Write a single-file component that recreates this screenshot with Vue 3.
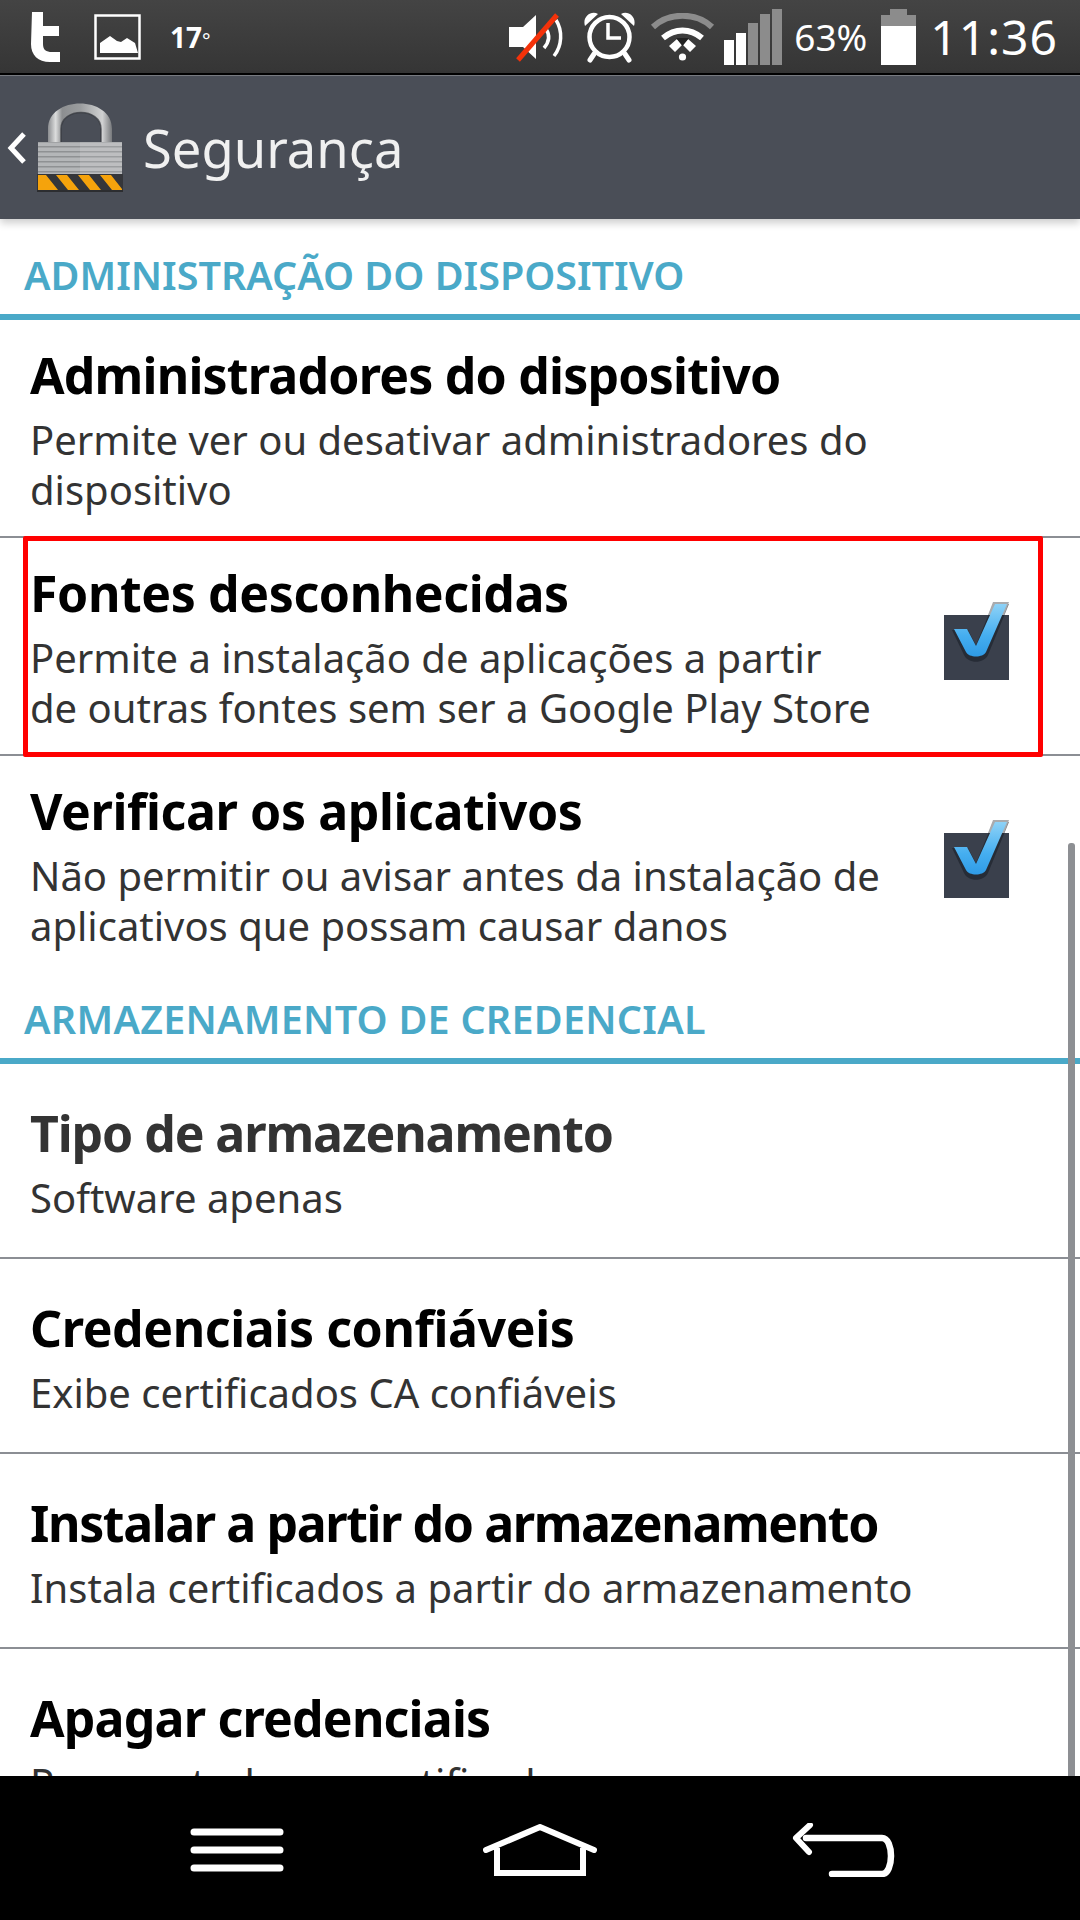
<template>
  <div class="screen">
    <!-- status bar -->
    <div class="status-bar">
      <div class="status-left">
        <svg class="ic-t" width="32" height="50" viewBox="0 0 32 50">
          <path d="M2 0h11v14h16v10H13v8c0 6 3 8 9 8h8v10h-10C8 50 1 43 1 32z" fill="#fff" />
        </svg>
        <svg class="ic-pic" width="47" height="46" viewBox="0 0 47 46">
          <rect x="1.5" y="1.5" width="44" height="43" fill="none" stroke="#fff" stroke-width="2.5" />
          <path d="M6 39V29l10-7 7 5 4 1 6-4 8 5 3 10z" fill="#fff" />
        </svg>
        <span class="temp">17<span class="deg">°</span></span>
      </div>
      <div class="status-right">
        <svg width="56" height="50" viewBox="0 0 56 50">
          <path d="M0 15h14L27 3v44L14 35H0z" fill="#fff" />
          <path d="M37 17c4 6 4 12 -2 19M47 8c7 11 6 26 -2 36" fill="none" stroke="#fff" stroke-width="3.5" />
          <path d="M9 48L48 3" stroke="#f4320a" stroke-width="5" />
        </svg>
        <svg class="ic-clock" width="55" height="52" viewBox="0 0 55 52">
          <circle cx="27.5" cy="26" r="20" fill="none" stroke="#fff" stroke-width="4.5" />
          <path d="M26 12v15h13" fill="none" stroke="#fff" stroke-width="3.5" />
          <path d="M3 15C0 6 9-1 16 3zM52 15c3-9-6-16-13-12z" fill="#fff" />
          <path d="M12 43l-4 6M43 43l4 6" stroke="#fff" stroke-width="5" stroke-linecap="round" />
        </svg>
        <svg class="ic-wifi" width="65" height="48" viewBox="0 0 65 48">
          <path d="M3 14C19-1 46-1 62 14" fill="none" stroke="#8c8c8c" stroke-width="6" />
          <path d="M13 25c12-10 27-10 39 0" fill="none" stroke="#fff" stroke-width="6" />
          <path d="M19 33l8-7 5 6-7 7zM46 33l-8-7-5 6 7 7z" fill="#fff" />
          <path d="M26 25h13l-6.500 8z" fill="#222" />
          <circle cx="32.500" cy="44" r="3.600" fill="#fff" />
        </svg>
        <div class="signal">
          <i v-for="bar in signalBars" :key="bar.h" :class="{ off: bar.off }" :style="{ height: bar.h + 'px' }"></i>
        </div>
        <span class="pct">63%</span>
        <div class="battery">
          <div class="cap"></div>
          <div class="body"><div class="fill"></div></div>
        </div>
        <span class="clock">11:36</span>
      </div>
    </div>

    <!-- title bar -->
    <div class="title-bar">
      <svg class="back" width="22" height="34" viewBox="0 0 22 34">
        <path d="M18 3L5 17l13 14" fill="none" stroke="#fff" stroke-width="5" />
      </svg>
      <svg class="lock" width="86" height="90" viewBox="0 0 86 90">
        <defs>
          <linearGradient id="shackle" x1="0" y1="0" x2="1" y2="0">
            <stop offset="0" stop-color="#8b8d90" />
            <stop offset="0.12" stop-color="#dcdddd" />
            <stop offset="0.22" stop-color="#8c8e90" />
            <stop offset="0.5" stop-color="#9a9c9e" />
            <stop offset="0.85" stop-color="#d0d1d2" />
            <stop offset="1" stop-color="#77797c" />
          </linearGradient>
          <pattern id="ribs" width="4" height="5" patternUnits="userSpaceOnUse">
            <rect width="4" height="5" fill="#b4b6b8" />
            <rect y="3" width="4" height="1.500" fill="#8f9193" />
          </pattern>
        </defs>
        <path d="M11 42V26C11-8 75-8 75 26V42H64V26C64 4 24 4 24 26V42Z" fill="url(#shackle)" />
        <path d="M24 40V26C24 4 64 4 64 26V40" fill="none" stroke="#33363c" stroke-width="1.500" opacity="0.7" />
        <rect x="1" y="39" width="84" height="33" fill="url(#ribs)" />
        <rect x="43" y="39" width="42" height="33" fill="#fff" opacity="0.12" />
        <rect x="0" y="71" width="86" height="16" fill="#35363a" />
        <path d="M1 72h8l12 15H1zM19 72h11l12 15H31zM41 72h11l12 15H53zM63 72h11l11 14v1H75z" fill="#f5a30c" />
        <rect x="0" y="87" width="86" height="2" fill="#2c2d30" />
      </svg>
      <span class="title">Segurança</span>
    </div>

    <!-- settings list -->
    <div class="list">
      <template v-for="section in sections" :key="section.name">
        <div class="section-head" :class="section.cls">{{ section.name }}</div>
        <div
          v-for="row in section.rows"
          :key="row.title"
          class="row"
          :class="[row.cls, { muted: row.muted }]"
        >
          <div class="row-text">
            <div class="row-title" :class="row.fit">{{ row.title }}</div>
            <div class="row-sub">
              <div v-for="line in row.sub" :key="line">{{ line }}</div>
            </div>
          </div>
          <svg v-if="row.check" class="check" width="66" height="80" viewBox="0 0 66 80">
            <defs>
              <linearGradient id="tick" x1="0" y1="0" x2="0" y2="1">
                <stop offset="0" stop-color="#8ed2f7" />
                <stop offset="0.6" stop-color="#45aef0" />
                <stop offset="1" stop-color="#2f9be6" />
              </linearGradient>
            </defs>
            <rect x="0" y="14" width="65" height="65" fill="#3a404c" />
            <path d="M8 27H24L32 42L49 1H65L44 52C40 61 24 61 20 52Z" fill="#151b25" opacity="0.55" transform="translate(0 2)" />
            <path d="M49 1H65L60 14H44Z" fill="#a9abae" />
            <path d="M10 28H23L32 45L51 3H63L42 51C39 57 25 57 22 51Z" fill="url(#tick)" />
          </svg>
          <div v-if="row.boxed" class="highlight"></div>
        </div>
      </template>
      <div class="scrollbar"></div>
    </div>

    <!-- nav bar -->
    <div class="nav-bar">
      <svg width="94" height="44" viewBox="0 0 94 44">
        <path d="M4 4h86M4 22h86M4 40h86" stroke="#fff" stroke-width="7" stroke-linecap="round" />
      </svg>
      <svg class="nav-home" width="114" height="52" viewBox="0 0 114 52">
        <path d="M3 26L57 3l54 23" fill="none" stroke="#fff" stroke-width="6" stroke-linecap="round" stroke-linejoin="round" />
        <path d="M14 24v25h86V24" fill="none" stroke="#fff" stroke-width="6" />
      </svg>
      <svg class="nav-back" width="104" height="54" viewBox="0 0 104 54">
        <path d="M14 15h76c12 0 12 36 0 36H40" fill="none" stroke="#fff" stroke-width="6.500" stroke-linecap="round" />
        <path d="M18 2L4 15l13 14" fill="none" stroke="#fff" stroke-width="6" stroke-linecap="round" stroke-linejoin="round" />
      </svg>
    </div>
  </div>
</template>

<script setup>
const signalBars = [
  { h: 25 },
  { h: 32 },
  { h: 42, off: true },
  { h: 51, off: true },
  { h: 56, off: true },
];

const sections = [
  {
    name: "ADMINISTRAÇÃO DO DISPOSITIVO",
    rows: [
      {
        title: "Administradores do dispositivo",
        sub: ["Permite ver ou desativar administradores do", "dispositivo"],
        cls: "h-first",
      },
      {
        title: "Fontes desconhecidas",
        sub: ["Permite a instalação de aplicações a partir", "de outras fontes sem ser a Google Play Store"],
        check: true,
        boxed: true,
        cls: "h-second",
        fit: "loose",
      },
      {
        title: "Verificar os aplicativos",
        sub: ["Não permitir ou avisar antes da instalação de", "aplicativos que possam causar danos"],
        check: true,
        cls: "h-third",
        fit: "loose",
      },
    ],
  },
  {
    name: "ARMAZENAMENTO DE CREDENCIAL",
    cls: "wide",
    rows: [
      { title: "Tipo de armazenamento", sub: ["Software apenas"], muted: true, cls: "h-single", fit: "snug" },
      { title: "Credenciais confiáveis", sub: ["Exibe certificados CA confiáveis"], cls: "h-single", fit: "loose" },
      { title: "Instalar a partir do armazenamento", sub: ["Instala certificados a partir do armazenamento"], cls: "h-single", fit: "tight" },
      { title: "Apagar credenciais", sub: ["Remove todos os certificados"], cls: "h-single" },
    ],
  },
];
</script>

<style>
html,
body {
  margin: 0;
  background: #fff;
}
</style>

<style scoped>
.screen {
  width: 1080px;
  height: 1920px;
  display: flex;
  flex-direction: column;
  overflow: hidden;
  background: #fff;
  font-family: "Noto Sans", "Open Sans", sans-serif;
}

.status-bar {
  height: 75px;
  flex-shrink: 0;
  display: flex;
  justify-content: space-between;
  align-items: center;
  box-sizing: border-box;
  padding: 0 22px 0 30px;
  background: linear-gradient(#444444, #353535);
  border-bottom: 2px solid #000;
  color: #fff;
}

.status-left,
.status-right {
  display: flex;
  align-items: center;
}

.ic-pic {
  margin-left: 32px;
}

.temp {
  margin-left: 29px;
  font-size: 28px;
  font-weight: 700;
}

.deg {
  font-size: 20px;
  font-weight: 400;
}

.ic-clock {
  margin-left: 17px;
}

.ic-wifi {
  margin-left: 13px;
}

.signal {
  display: flex;
  align-items: flex-end;
  gap: 2px;
  height: 56px;
  margin-left: 9px;
}

.signal i {
  width: 10px;
  background: #fff;
}

.signal i.off {
  background: #8c8c8c;
}

.pct {
  margin-left: 12px;
  font-size: 37px;
}

.battery {
  margin-left: 14px;
  width: 35px;
  height: 56px;
  display: flex;
  flex-direction: column;
  align-items: center;
}

.cap {
  width: 17px;
  height: 6px;
  background: #8c8c8c;
}

.body {
  flex: 1;
  width: 35px;
  display: flex;
  flex-direction: column;
  justify-content: flex-end;
  background: #8c8c8c;
}

.fill {
  height: 77%;
  background: #fff;
}

.clock {
  margin-left: 14px;
  font-size: 48px;
  letter-spacing: 1px;
}

.title-bar {
  height: 144px;
  flex-shrink: 0;
  display: flex;
  align-items: center;
  box-sizing: border-box;
  padding-left: 6px;
  background: #4a4e57;
  border-top: 1px solid #777a80;
  box-shadow: 0 4px 8px rgba(0, 0, 0, 0.2);
  position: relative;
  z-index: 1;
}

.back {
  flex-shrink: 0;
}

.lock {
  margin-left: 9px;
  flex-shrink: 0;
}

.title {
  margin-left: 20px;
  font-size: 52.5px;
  color: #f0f0f0;
}

.list {
  flex: 1;
  min-height: 0;
  overflow: hidden;
  position: relative;
}

.section-head {
  height: 101px;
  box-sizing: border-box;
  padding: 0 0 12px 24px;
  display: flex;
  align-items: flex-end;
  border-bottom: 6px solid #4aa9c8;
  color: #4aa9c8;
  font-size: 39.5px;
  line-height: 54px;
  font-weight: 600;
}

.section-head.wide {
  letter-spacing: 0.25px;
}

.row {
  position: relative;
  display: flex;
  align-items: center;
  box-sizing: border-box;
  padding: 4px 70px 0 30px;
  border-bottom: 2px solid #8b8e94;
}

.row:last-child,
.h-third {
  border-bottom: none;
}

.h-first {
  height: 218px;
}

.h-second {
  height: 218px;
}

.h-third {
  height: 207px;
  padding-top: 12px;
}

.h-single {
  height: 195px;
}

.row-text {
  flex: 1;
  min-width: 0;
}

.row-title {
  font-size: 50px;
  font-weight: 700;
  line-height: 60px;
  letter-spacing: -0.8px;
  color: #000;
}

.row-title.loose {
  letter-spacing: -0.4px;
}

.row-title.snug {
  letter-spacing: -1.1px;
}

.row-title.tight {
  letter-spacing: -1.4px;
}

.muted .row-title {
  color: #333;
}

.row-sub {
  margin-top: 10px;
  font-size: 40px;
  line-height: 50px;
  color: #333;
  white-space: nowrap;
}

.check {
  flex-shrink: 0;
  margin-top: -14px;
}

.highlight {
  position: absolute;
  left: 23px;
  top: -2px;
  width: 1020px;
  height: 221px;
  box-sizing: border-box;
  border: 5px solid #f00;
  border-radius: 2px;
  pointer-events: none;
}

.scrollbar {
  position: absolute;
  right: 5px;
  top: 624px;
  bottom: 0;
  width: 7px;
  background: #8d8f93;
  border-radius: 3px 3px 0 0;
}

.nav-bar {
  height: 144px;
  flex-shrink: 0;
  display: flex;
  align-items: center;
  box-sizing: border-box;
  padding-left: 190px;
  padding-top: 4px;
  background: #000;
  position: relative;
}

.nav-home {
  margin-left: 199px;
}

.nav-back {
  margin-left: 195px;
}
</style>
